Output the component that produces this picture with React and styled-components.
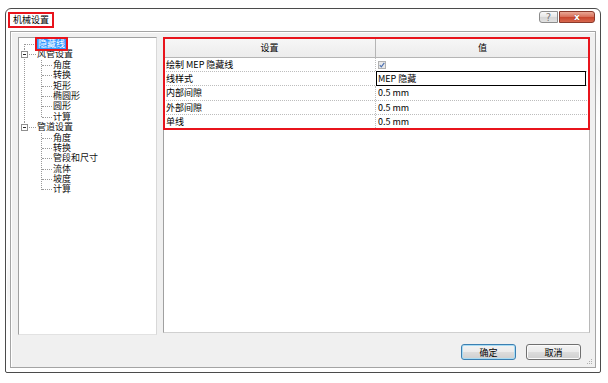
import React from "react";
import styled, { createGlobalStyle, css } from "styled-components";

const GlobalStyle = createGlobalStyle`
  body {
    margin: 0;
    background: #fff;
    font-family: "Noto Sans CJK SC", "Liberation Sans", sans-serif;
  }
`;

// Red annotation frame drawn over a part
const annot = css`
  position: relative;
  &::after {
    content: "";
    position: absolute;
    inset: ${props => props.$inset || "-2px"};
    border: 2px solid #e8141c;
    pointer-events: none;
    z-index: 3;
  }
`;

const Window = styled.div`
  margin: 8px 0 0 5px;
  width: 596px;
  height: 365px;
  box-sizing: border-box;
  border: 1px solid #4b4b4b;
  border-radius: 6px 6px 2px 2px;
  background: linear-gradient(160deg, #ffffff 0%, #ffffff 40%, #f3f3f3 48%, #ffffff 56%, #ffffff 100%);
  box-shadow: inset 1px 1px 0 #fff;
  display: flex;
  flex-direction: column;
`;

const TitleBar = styled.div`
  height: 22px;
  display: flex;
  align-items: flex-start;
  justify-content: space-between;
  padding: 0 5px 0 1px;
`;

const Title = styled.div`
  ${annot};
  margin: 5px 0 0 3px;
  padding: 0 3px;
  height: 12px;
  font-size: 9px;
  line-height: 12px;
  color: #000;
`;

const Caption = styled.div`
  display: flex;
  gap: 1px;
  margin-top: 2px;
`;

const CapButton = styled.div`
  height: 12px;
  box-sizing: border-box;
  display: flex;
  align-items: center;
  justify-content: center;
  font-family: "DejaVu Sans", sans-serif;
  ${props =>
    props.$close
      ? css`
          width: 36px;
          font-size: 9px;
          font-weight: bold;
          border: 1px solid #8a3a2c;
          border-radius: 0 3px 3px 0;
          background: linear-gradient(#eaa896, #d9745f 45%, #c8472f 55%, #d8684e);
          color: #fff;
          text-shadow: 0 0 1px #6a1a10;
        `
      : css`
          width: 19px;
          font-size: 10px;
          border: 1px solid #8c8c8c;
          border-radius: 3px 0 0 3px;
          background: linear-gradient(#fafafa, #e6e6e6 50%, #d6d6d6 51%, #e2e2e2);
          color: #7a7a7a;
        `}
`;

const ContentPanel = styled.div`
  position: relative;
  flex: 1;
  margin: 0 4px 4px;
  border: 1px solid #a4a4a4;
  background: #f0f0f0;
  box-shadow: inset 1px 1px 0 #fff;
  display: flex;
  flex-direction: column;
  padding: 5px 5px 7px 7px;
`;

const Main = styled.div`
  flex: 1;
  display: flex;
  gap: 6px;
  align-items: flex-start;
`;

const TreePanel = styled.div`
  width: 139px;
  height: 298px;
  box-sizing: border-box;
  background: #fff;
  border: 1px solid;
  border-color: #a0a0a0 #d8d8d8 #e2e2e2 #a0a0a0;
  font-size: 9px;
  color: #111;
`;

const TreeList = styled.ul`
  list-style: none;
  margin: 0;
  padding: 1px 0 0 0;
`;

const RootNode = styled.li`
  position: relative;
  &::before {
    content: "";
    position: absolute;
    left: 5px;
    top: ${props => (props.$first ? "5px" : "0")};
    ${props => (props.$last ? "height: 5px;" : "bottom: 0;")}
    border-left: 1px dotted #9a9a9a;
  }
`;

const ChildList = styled.ul`
  list-style: none;
  margin: 0;
  padding: 0;
  position: relative;
  &::before {
    content: "";
    position: absolute;
    left: 22px;
    top: 0;
    bottom: 5px;
    border-left: 1px dotted #9a9a9a;
  }
`;

const NodeRow = styled.div`
  position: relative;
  height: 10.4px;
  line-height: 10.4px;
  padding-left: ${props => (props.$level ? 34 : 18)}px;
  white-space: nowrap;
  &::before {
    content: "";
    position: absolute;
    left: ${props => (props.$level ? 23 : 6)}px;
    width: ${props => (props.$level ? 10 : 11)}px;
    top: 5px;
    border-top: 1px dotted #9a9a9a;
  }
`;

const ExpandBox = styled.span`
  position: absolute;
  left: 2px;
  top: 1.5px;
  width: 7px;
  height: 7px;
  box-sizing: border-box;
  border: 1px solid #8f8f8f;
  background: #fff;
  z-index: 2;
  &::before {
    content: "";
    position: absolute;
    left: 1px;
    right: 1px;
    top: 2px;
    border-top: 1px solid #2a2a2a;
  }
`;

const Label = styled.span`
  display: inline-block;
  ${props =>
    props.$selected &&
    css`
      ${annot};
      background: #3399ff;
      color: #fff;
      padding: 0 1px;
      outline: 1px dotted #1a4f9a;
    `}
`;

const TablePanel = styled.div`
  width: 427px;
  height: 296px;
  box-sizing: border-box;
  background: #fff;
  border: 1px solid;
  border-color: #a0a0a0 #b8b8b8 #d0d0d0 #a0a0a0;
  font-size: 9px;
  color: #000;
`;

const Grid = styled.div`
  ${annot};
`;

const HeaderRow = styled.div`
  display: grid;
  grid-template-columns: 211px 1fr;
  height: 20px;
  box-sizing: border-box;
  background: linear-gradient(#f7f7f7, #ececec);
  border-bottom: 1px solid #b5b5b5;
`;

const HeadCell = styled.div`
  display: flex;
  align-items: center;
  justify-content: center;
  border-left: ${props => (props.$first ? "none" : "1px solid #b5b5b5")};
`;

const Row = styled.div`
  display: grid;
  grid-template-columns: 211px 1fr;
  height: 14.2px;
  box-sizing: border-box;
  border-bottom: 1px dotted #bdbdbd;
`;

const Cell = styled.div`
  display: flex;
  align-items: center;
  padding-left: 2px;
  line-height: 13px;
  white-space: nowrap;
  border-left: ${props => (props.$first ? "none" : "1px dotted #bdbdbd")};
  ${props =>
    props.$editing &&
    css`
      margin: -1px 3px -1px 1px;
      padding-left: 1px;
      border: 1px solid #000;
    `}
`;

const CheckBox = styled.span`
  width: 8px;
  height: 8px;
  box-sizing: border-box;
  border: 1px solid #b0b0b0;
  background: #e8e8e8;
  display: flex;
  align-items: center;
  justify-content: center;
`;

const Footer = styled.div`
  display: flex;
  justify-content: flex-end;
  gap: 10px;
  margin-top: 8px;
  padding-right: 9px;
`;

const Button = styled.div`
  width: 55px;
  height: 16px;
  box-sizing: border-box;
  border: 1px solid ${props => (props.$default ? "#3c7fb1" : "#707070")};
  border-radius: 3px;
  background: linear-gradient(#f3f3f3, #ebebeb 49%, #dddddd 50%, #cfcfcf);
  box-shadow: inset 0 0 0 1px ${props => (props.$default ? "#a8dcf4" : "#fbfbfb")};
  font-size: 9px;
  display: flex;
  align-items: center;
  justify-content: center;
  color: #000;
`;

const Grip = styled.svg`
  position: absolute;
  right: 2px;
  bottom: 2px;
`;

const tree = [
  { label: "隐藏线", selected: true },
  { label: "风管设置", children: ["角度", "转换", "矩形", "椭圆形", "圆形", "计算"] },
  { label: "管道设置", children: ["角度", "转换", "管段和尺寸", "流体", "坡度", "计算"] },
];

const rows = [
  { name: "绘制 MEP 隐藏线", check: true },
  { name: "线样式", value: "MEP 隐藏", editing: true },
  { name: "内部间隙", value: "0.5 mm" },
  { name: "外部间隙", value: "0.5 mm" },
  { name: "单线", value: "0.5 mm" },
];

function App() {
  return (
    <>
      <GlobalStyle />
      <Window>
        <TitleBar>
          <Title>机械设置</Title>
          <Caption>
            <CapButton>?</CapButton>
            <CapButton $close>x</CapButton>
          </Caption>
        </TitleBar>
        <ContentPanel>
          <Main>
            <TreePanel>
              <TreeList>
                {tree.map((node, i) => (
                  <RootNode key={i} $first={i === 0} $last={i === tree.length - 1}>
                    <NodeRow $level={0}>
                      {node.children && <ExpandBox />}
                      <Label $selected={node.selected}>{node.label}</Label>
                    </NodeRow>
                    {node.children && (
                      <ChildList>
                        {node.children.map((c, j) => (
                          <li key={j}>
                            <NodeRow $level={1}>{c}</NodeRow>
                          </li>
                        ))}
                      </ChildList>
                    )}
                  </RootNode>
                ))}
              </TreeList>
            </TreePanel>
            <TablePanel>
              <Grid $inset="-1px">
                <HeaderRow>
                  <HeadCell $first>设置</HeadCell>
                  <HeadCell>值</HeadCell>
                </HeaderRow>
                {rows.map((r, i) => (
                  <Row key={i}>
                    <Cell $first>{r.name}</Cell>
                    <Cell $editing={r.editing}>
                      {r.check ? (
                        <CheckBox>
                          <svg width="6" height="6" viewBox="0 0 6 6">
                            <path d="M0.8 3.2 L2.3 4.8 L5.3 0.8" fill="none" stroke="#4a6fb0" strokeWidth="1.1" />
                          </svg>
                        </CheckBox>
                      ) : (
                        r.value
                      )}
                    </Cell>
                  </Row>
                ))}
              </Grid>
            </TablePanel>
          </Main>
          <Footer>
            <Button $default>确定</Button>
            <Button>取消</Button>
          </Footer>
          <Grip width="6" height="6" viewBox="0 0 6 6">
            <rect x="4" y="0" width="1" height="1" fill="#b0b0b0" />
            <rect x="2" y="2" width="1" height="1" fill="#b0b0b0" />
            <rect x="4" y="2" width="1" height="1" fill="#b0b0b0" />
            <rect x="0" y="4" width="1" height="1" fill="#b0b0b0" />
            <rect x="2" y="4" width="1" height="1" fill="#b0b0b0" />
            <rect x="4" y="4" width="1" height="1" fill="#b0b0b0" />
          </Grip>
        </ContentPanel>
      </Window>
    </>
  );
}

export default App;
